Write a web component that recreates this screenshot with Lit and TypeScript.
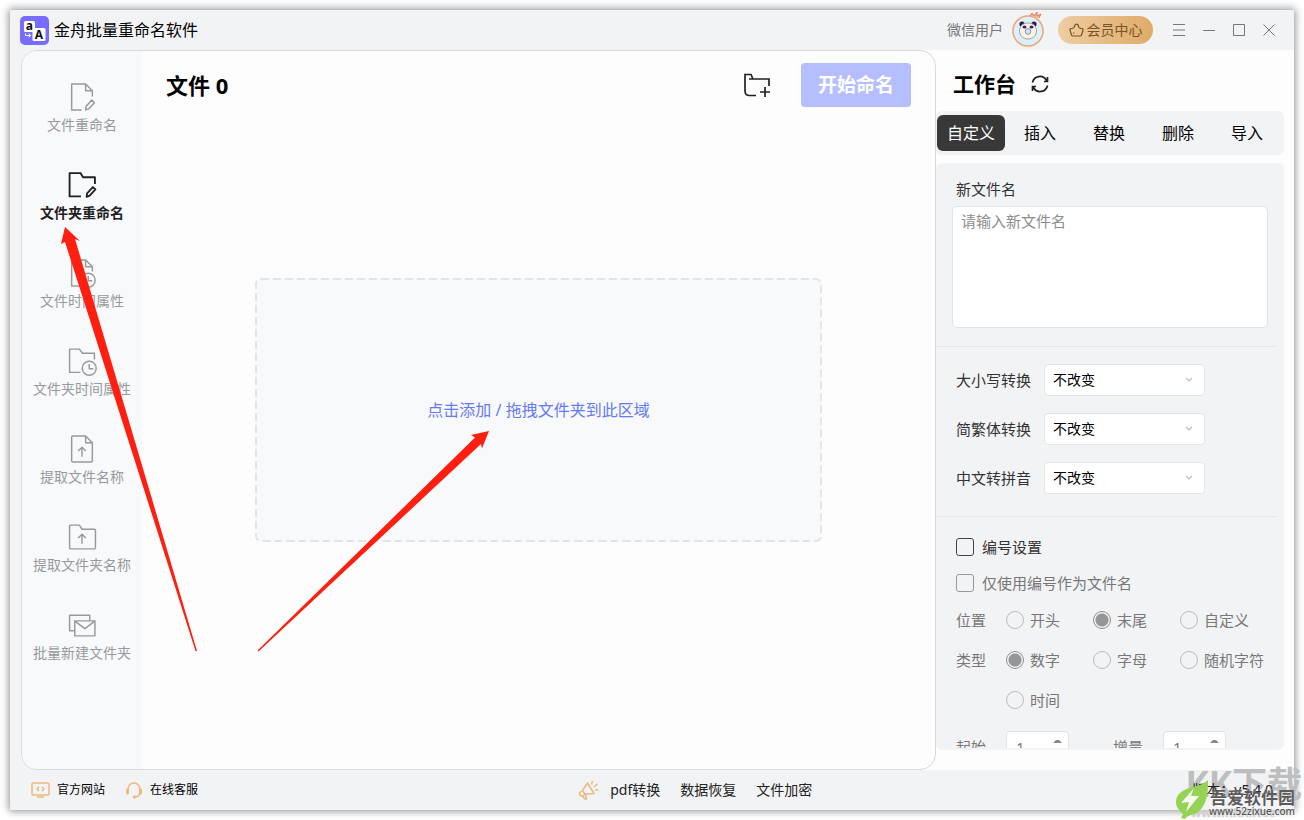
import { LitElement, html, css, svg, TemplateResult } from "lit";
import { customElement, property, state } from "lit/decorators.js";
import { classMap } from "lit/directives/class-map.js";

const paths: Record<string, TemplateResult> = {
  fileEdit: svg`<path d="M14 27H4.500V2H18l6.500 6.500V14M18 2v6.500h6.500M18 27l.5-3.500 5.500-6 2.500 2.500-5.500 6z"/>`,
  folderEdit: svg`<path d="M13.500 25.500H2.500V3H13l2.500 4h11.500v6.500M19 26l.4-3.500 5.600-6 2.500 2.300-5.600 6z"/>`,
  fileClock: svg`<path d="M12 27H4.500V2H18l6.500 6.500V13M18 2v6.500h6.500"/><circle cx="20.500" cy="21.500" r="6.700"/><path d="M20.500 17.500v4.500h4"/>`,
  folderClock: svg`<path d="M13 25.500H2.500V3H12L15 7h11.500v6"/><circle cx="21.500" cy="21.500" r="6.700"/><path d="M21.500 17.500v4.500h4"/>`,
  fileUp: svg`<path d="M18 2H5.500a1 1 0 0 0-1 1v23a1 1 0 0 0 1 1h18a1 1 0 0 0 1-1V8.500L18 2v6.500h6.500M14.500 22v-9M10.800 16.500l3.700-3.700 3.700 3.700"/>`,
  folderUp: svg`<path d="M3.500 3H12l2.500 4h12a1 1 0 0 1 1 1v17a1 1 0 0 1-1 1h-23a1 1 0 0 1-1-1V4a1 1 0 0 1 1-1zM14.500 21v-9M10.800 15.500l3.700-3.700 3.700 3.700"/>`,
  mails: svg`<path d="M7 20H2.500V5h19.500v5M7.500 10.500h19.500v14.500H7.500zM8 11l9.300 7 9.200-7"/>`,
};

@customElement("side-item")
class SideItem extends LitElement {
  @property() icon = "";
  @property() label = "";
  @property({ type: Boolean }) active = false;

  static styles = css`
    :host { display: block; }
    .item {
      display: flex; flex-direction: column; align-items: center; gap: 3px;
      width: 100%; padding: 0; border: 0; background: none; cursor: pointer;
      font: 14px/20px "Noto Sans", "Noto Sans CJK SC", sans-serif; color: #98999b; white-space: nowrap;
    }
    .active { color: #1f2023; font-weight: 700; }
    svg { width: 30px; height: 30px; fill: none; stroke: currentColor; stroke-width: 1.4; stroke-linejoin: round; }
    .active svg { stroke-width: 1.8; }
  `;

  render() {
    return html`<button class=${classMap({ item: true, active: this.active })}>
      <svg viewBox="0 0 29 29" aria-hidden="true">${paths[this.icon]}</svg>${this.label}
    </button>`;
  }
}

@customElement("app-root")
class AppRoot extends LitElement {
  @state() private section = 1;
  @state() private tab = 0;

  private sections = [
    ["fileEdit", "文件重命名"],
    ["folderEdit", "文件夹重命名"],
    ["fileClock", "文件时间属性"],
    ["folderClock", "文件夹时间属性"],
    ["fileUp", "提取文件名称"],
    ["folderUp", "提取文件夹名称"],
    ["mails", "批量新建文件夹"],
  ];
  private tabs = ["自定义", "插入", "替换", "删除", "导入"];
  private converts = ["大小写转换", "简繁体转换", "中文转拼音"];

  static styles = css`
    :host {
      display: block; position: relative; box-sizing: border-box; height: 100vh; min-height: 600px;
      padding: 10px; background: #fff; overflow: hidden; color: #000;
      font: 14px/20px "Noto Sans", "Noto Sans CJK SC", sans-serif;
    }
    * { box-sizing: border-box; }
    button, input, select, textarea { font: inherit; color: inherit; margin: 0; }
    button { border: 0; padding: 0; background: none; cursor: pointer; }
    a { color: inherit; text-decoration: none; }
    svg { display: block; flex: none; }

    .window {
      display: flex; flex-direction: column; height: 100%; background: #f2f3f5;
      box-shadow: 0 0 8px 1px rgba(0, 0, 0, 0.45);
    }

    .titlebar { display: flex; align-items: center; height: 40px; flex: none; padding: 0 10px; }
    .title { margin-left: 5px; margin-right: auto; font-size: 16px; line-height: 24px; }
    .user { color: #777; margin-right: 9px; }
    .vip {
      display: flex; align-items: center; justify-content: center; gap: 3px; width: 95px; height: 28px;
      margin: 0 11px 0 14px; border-radius: 14px; color: #7a5320;
      background: linear-gradient(90deg, #edcda3, #dfab69);
    }
    .control { display: grid; place-items: center; width: 30px; height: 30px; color: #777; }

    .body { display: flex; flex: 1; min-height: 0; }
    .card {
      position: relative; z-index: 1; display: flex; flex: 1; min-width: 0; margin-left: 11px;
      border: 1px solid #d9dadd; border-radius: 16px; background: #fdfdfd; overflow: hidden;
    }
    .sidebar {
      display: flex; flex-direction: column; gap: 35px; width: 120px; flex: none;
      padding-top: 31px; background: #f8f9fb;
    }
    .main { display: flex; flex-direction: column; flex: 1; min-width: 0; padding-bottom: 68px; }
    .toolbar { display: flex; align-items: center; height: 68px; flex: none; padding: 0 24px; }
    h1, h2 { margin: 0; font-size: 21px; line-height: 30px; font-weight: 700; }
    .toolbar h1 { margin-right: auto; font-size: 22px; }
    .start {
      width: 110px; height: 44px; margin-left: 30px; border-radius: 4px;
      background: #b5bfff; color: #fff; font-size: 19px; font-weight: 700;
    }
    .dropzone {
      display: grid; place-items: center; height: 264px; margin: auto 113px; border-radius: 6px;
      background: #f8f9fb; color: #667af8; font-size: 16px;
    }
    .dropzone > * { grid-area: 1 / 1; }
    .outline { width: 100%; height: 264px; }
    .outline rect { width: calc(100% - 2px); height: calc(100% - 2px); }

    .work { display: flex; flex-direction: column; width: 374px; flex: none; margin-left: -16px; padding: 0 10px 20px 16px; background: #fdfdfd; }
    .heading { display: flex; align-items: center; gap: 15px; height: 61px; flex: none; padding: 6px 17px 0; }
    .tabs { display: flex; gap: 1px; padding: 4px 3px 4px 1px; border-radius: 6px; background: #f2f3f5; flex: none; }
    .tab { flex: 1; height: 36px; border-radius: 6px; font-size: 16px; }
    .tab.on { background: #383838; color: #fff; }
    .panel { flex: 1; min-height: 0; margin-top: 8px; padding-bottom: 2px; border-radius: 6px; background: #f2f3f5; }
    .scroll { height: 100%; overflow: hidden; font-size: 15px; color: #333; }
    .name { display: flex; flex-direction: column; gap: 7px; padding: 16px 16px 18px; }
    .name label { padding-left: 4px; }
    .name textarea {
      display: block; width: 100%; height: 122px; padding: 4px 8px; resize: none; outline: none;
      border: 1px solid #e2e3e6; border-radius: 5px; background: #fff;
    }
    ::placeholder { color: #8d8d8d; opacity: 1; }
    .rule { height: 1px; margin: 0 8px 0 0; border: 0; background: #e4e5e8; }
    .converts { display: grid; grid-template-columns: 76px 161px; gap: 17px 12px; align-items: center; padding: 17px 20px 22px; }
    .pick { display: grid; align-items: center; }
    .pick > * { grid-area: 1 / 1; }
    .pick select {
      width: 100%; height: 32px; padding: 0 8px; appearance: none; outline: none; font-size: 14px; color: #000;
      border: 1px solid #e4e5e8; border-radius: 4px; background: #fff;
    }
    .pick svg { justify-self: end; margin-right: 12px; pointer-events: none; }
    .numbering { display: flex; flex-direction: column; gap: 16px; padding: 20px 0 20px 20px; color: #777; }
    .check { display: flex; align-items: center; gap: 8px; }
    .check.strong { color: #333; }
    .check input { appearance: none; width: 18px; height: 18px; border: 1px solid #999; border-radius: 3px; }
    .check.strong input { border-color: #444; }
    .grid { display: grid; grid-template-columns: 50px 87px 87px 1fr; row-gap: 20px; padding-top: 1px; line-height: 20px; }
    .radio { display: flex; align-items: center; gap: 6px; white-space: nowrap; }
    .radio input { appearance: none; width: 18px; height: 18px; border: 1px solid #bbb; border-radius: 50%; }
    .radio input:checked { border-color: #8f9092; background: radial-gradient(circle, #959698 6px, transparent 7px); }
    .second { grid-column: 2; }
    .numbers { display: grid; grid-template-columns: 50px 107px 50px 63px; align-items: center; margin-top: 5px; }
    .spin { display: flex; align-items: center; width: 63px; height: 32px; border: 1px solid #e2e3e6; border-radius: 4px; background: #fff; }
    .spin input { width: 100%; min-width: 0; padding: 0 0 0 9px; border: 0; outline: 0; background: none; appearance: textfield; }
    .spin input::-webkit-inner-spin-button { appearance: none; }
    .spin svg { margin-right: 6px; }

    .footer { display: flex; align-items: center; justify-content: space-between; height: 40px; flex: none; padding: 0 21px; }
    .group { display: flex; align-items: center; gap: 20px; color: #222; }
    .link { display: flex; align-items: center; gap: 7px; font-size: 12px; color: #000; }
    .promo { gap: 11px; display: flex; align-items: center; }
    .version { position: relative; z-index: 2; }

    .overlay { position: absolute; left: 0; top: 0; pointer-events: none; z-index: 3; }
    .mark { position: absolute; right: 0; bottom: 0; width: 130px; height: 58px; pointer-events: none; }
    .mark span { position: absolute; white-space: nowrap; font-weight: 700; }
    .kk { z-index: 1; right: 2px; top: 2px; font-size: 35px; line-height: 40px; color: #bdbebf; }
    .mark .kkurl { z-index: 1; left: 17px; bottom: 0; font-size: 12px; line-height: 14px; color: #d0d0d0; }
    .site { z-index: 4; right: 9px; top: 25px; font-size: 17px; line-height: 22px; color: #5b5b5b; text-shadow: 0 0 1px #fff; }
    .mark .siteurl { z-index: 4; right: 9px; bottom: 2px; font-size: 10px; line-height: 14px; color: #555; font-weight: 500; text-shadow: 0 0 2px #fff; }
    .leaf { position: absolute; z-index: 4; left: 0; top: 17px; }
  `;

  private radio(group: string, text: string, checked = false, cls = "") {
    return html`<label class="radio ${cls}"><input type="radio" name=${group} .checked=${checked}>${text}</label>`;
  }

  private spin(id: string) {
    return html`<span class="spin"><input id=${id} type="number" value="1">
      <svg width="9" height="22" viewBox="0 0 9 22" fill="#888"><path d="M0 7l3-3h3l3 3zM0 16l3 3h3l3-3z"/></svg></span>`;
  }

  render() {
    return html`
      <div class="window">
        <header class="titlebar">
          <svg width="29" height="29" viewBox="0 0 29 29" aria-hidden="true">
            <rect width="29" height="29" rx="5" fill="#766cff"/>
            <rect x="4" y="5" width="11" height="11" rx="1.500" fill="#fff"/>
            <rect x="12.500" y="12" width="13" height="13" rx="1.500" fill="#fff"/>
            <text x="9.400" y="13.500" font-size="12" font-weight="700" text-anchor="middle" fill="#111">a</text>
            <text x="19" y="22.500" font-size="12" font-weight="700" text-anchor="middle" fill="#111">A</text>
            <path d="M5.500 17.500v2h5M8.700 17.700l2 1.800-2 1.800" fill="none" stroke="#fff"/>
          </svg>
          <span class="title">金舟批量重命名软件</span>
          <span class="user">微信用户</span>
          <svg width="32" height="36" viewBox="0 0 32 36" role="img" aria-label="头像">
            <circle cx="16" cy="19" r="15" fill="#daf0fb" stroke="#eea477" stroke-width="1.500"/>
            <path d="M18 4l2-3 2 3 3-4 0 4 4-2-2 4" fill="#f3b79a" stroke="#db7b58"/>
            <circle cx="10" cy="12" r="2.600" fill="#2d1c50"/><circle cx="22" cy="12" r="2.600" fill="#2d1c50"/>
            <path d="M16 11c5 0 8.500 3 8.500 8 0 4-3 8-8.500 8s-8.500-4-8.500-8c0-5 3.500-8 8.500-8z" fill="#fbf1e5" stroke="#b09aa5"/>
            <ellipse cx="12.500" cy="15" rx="2" ry="1.600" fill="#36265e"/><ellipse cx="19.500" cy="15" rx="2" ry="1.600" fill="#36265e"/>
            <circle cx="16" cy="19.500" r="2.800" fill="#cfe7f5" stroke="#8199b3"/>
          </svg>
          <button class="vip">
            <svg width="15" height="14" viewBox="0 0 15 14" fill="none" stroke="currentColor" stroke-width="1.200" stroke-linejoin="round"><path d="M4 13q-1.200 0-1.500-1L1 7q-.3-1.500 1.200-1.500 2.300 0 2.800-1L6 2q1.500-1.800 3 0l1 2.500q.5 1 2.800 1 1.500 0 1.200 1.500l-1.500 5q-.3 1-1.500 1zM4.500 9.500l.5 1"/></svg>会员中心
          </button>
          <button class="control" aria-label="菜单"><svg width="12" height="12" stroke="currentColor"><path d="M0 .5h12M0 6h12M0 11.500h12"/></svg></button>
          <button class="control" aria-label="最小化"><svg width="12" height="12" stroke="currentColor"><path d="M0 6.500h12"/></svg></button>
          <button class="control" aria-label="最大化"><svg width="12" height="12" stroke="currentColor" fill="none"><path d="M.5 .5h11v11H.5z"/></svg></button>
          <button class="control" aria-label="关闭"><svg width="12" height="12" stroke="currentColor"><path d="M.5.5l11 11M11.500.5l-11 11"/></svg></button>
        </header>

        <div class="body">
          <div class="card">
            <nav class="sidebar">
              ${this.sections.map(([icon, label], i) => html`
                <side-item icon=${icon} label=${label} ?active=${i === this.section} @click=${() => (this.section = i)}></side-item>`)}
            </nav>
            <main class="main">
              <div class="toolbar">
                <h1>文件 0</h1>
                <button aria-label="添加文件夹">
                  <svg width="28" height="26" viewBox="0 0 28 26" fill="none" stroke="#222" stroke-width="1.700"><path d="M13 23.500H6.500Q2 23.500 2 19V2.500h6L10 7h16v7M6 7h5M22 15v10M17 20h10"/></svg>
                </button>
                <button class="start">开始命名</button>
              </div>
              <button class="dropzone">
                <svg class="outline" aria-hidden="true"><rect x="1" y="1" rx="5" fill="none" stroke="#e4e5e7" stroke-width="2" stroke-dasharray="8 4"/></svg>
                <span>点击添加 / 拖拽文件夹到此区域</span>
              </button>
            </main>
          </div>

          <aside class="work">
            <div class="heading">
              <h2>工作台</h2>
              <button aria-label="重置">
                <svg width="18" height="18" viewBox="0 0 18 18" fill="none" stroke="#222" stroke-width="1.700"><path d="M1.500 7.500a7.500 7.500 0 0 1 14-2M16.500 2v4.500h-3.500M16.500 10.500a7.500 7.500 0 0 1-14 2M1.500 16v-4.500H5"/></svg>
              </button>
            </div>
            <div class="tabs" role="tablist">
              ${this.tabs.map((t, i) => html`<button role="tab" class=${classMap({ tab: true, on: i === this.tab })} @click=${() => (this.tab = i)}>${t}</button>`)}
            </div>
            <div class="panel"><div class="scroll">
              <div class="name">
                <label for="newname">新文件名</label>
                <textarea id="newname" placeholder="请输入新文件名"></textarea>
              </div>
              <hr class="rule">
              <div class="converts">
                ${this.converts.map((c, i) => html`
                  <label for="conv${i}">${c}</label>
                  <span class="pick"><select id="conv${i}"><option>不改变</option></select>
                    <svg width="8" height="6" fill="none" stroke="#bbb" stroke-width="1.200"><path d="M1 1l3 3 3-3"/></svg></span>`)}
              </div>
              <hr class="rule">
              <div class="numbering">
                <label class="check strong"><input type="checkbox">编号设置</label>
                <label class="check"><input type="checkbox">仅使用编号作为文件名</label>
                <div class="grid">
                  <span>位置</span>${this.radio("pos", "开头")}${this.radio("pos", "末尾", true)}${this.radio("pos", "自定义")}
                  <span>类型</span>${this.radio("kind", "数字", true)}${this.radio("kind", "字母")}${this.radio("kind", "随机字符")}
                  ${this.radio("kind", "时间", false, "second")}
                </div>
                <div class="numbers">
                  <label for="from">起始</label>${this.spin("from")}
                  <label for="step">增量</label>${this.spin("step")}
                </div>
              </div>
            </div></div>
          </aside>
        </div>

        <footer class="footer">
          <div class="group">
            <a class="link" href="#"><svg width="19" height="16" viewBox="0 0 19 16" fill="none" stroke="#eabb80" stroke-width="1.500"><rect x="1" y="1" width="17" height="12" rx="1"/><path d="M8 5L6 7l2 2M11 5l2 2-2 2M6 15h7"/></svg>官方网站</a>
            <a class="link" href="#"><svg width="18" height="18" viewBox="0 0 18 18" fill="none" stroke="#eabb80" stroke-width="1.600"><path d="M3 10V8a6 6 0 0 1 12 0v2M15 12q-1 4-5 4"/><path d="M2.500 9v3M15.500 9v3" stroke-width="3" stroke-linecap="round"/><circle cx="9.500" cy="16" r="1"/></svg>在线客服</a>
          </div>
          <div class="group">
            <a class="promo" href="#"><svg width="21" height="20" viewBox="0 0 21 20" fill="none" stroke="#eabb80" stroke-width="1.500" stroke-linejoin="round"><path d="M1.500 12.500l3-2L9.500 3 16 13.500l-8.500.5-3 2q-1.500.5-2.500-1zM4.500 10.500l3 4.500M5 16l1.500 3h2L7.500 14M13.500 4.500l1-3.500M16 7l3.500-3M17 10h3.500"/></svg>pdf转换</a>
            <a href="#">数据恢复</a>
            <a href="#">文件加密</a>
          </div>
          <span class="group version">版本：v5.4.0</span>
        </footer>
      </div>

      <svg class="overlay" width="500" height="660" viewBox="0 0 500 660" fill="#ff1f10" aria-hidden="true">
        <path d="M65 227L61 244l4-2L195.500 651h1.500L75 239l5 2z"/>
        <path d="M489 431l-18 4 4 2.500L257.500 650.500l1 1L481 444l1 4.500z"/>
      </svg>
      <div class="mark" aria-hidden="true">
        <span class="kk">KK下载</span>
        <span class="kkurl">www.KKX.Net</span>
        <svg class="leaf" width="38" height="40" viewBox="0 0 38 40"><path d="M34 1Q35 32 17 36q-6 2-6 4l-4-1 2-4Q-2 26 4 16 9 10 19 8q10-2 15-7z" fill="#95d354"/><path d="M20 9L7 24l8-1-3 10L25 17h-8z" fill="#fff" opacity=".9"/></svg>
        <span class="site">吾爱软件园</span>
        <span class="siteurl">www.52zixue.com</span>
      </div>
    `;
  }
}
